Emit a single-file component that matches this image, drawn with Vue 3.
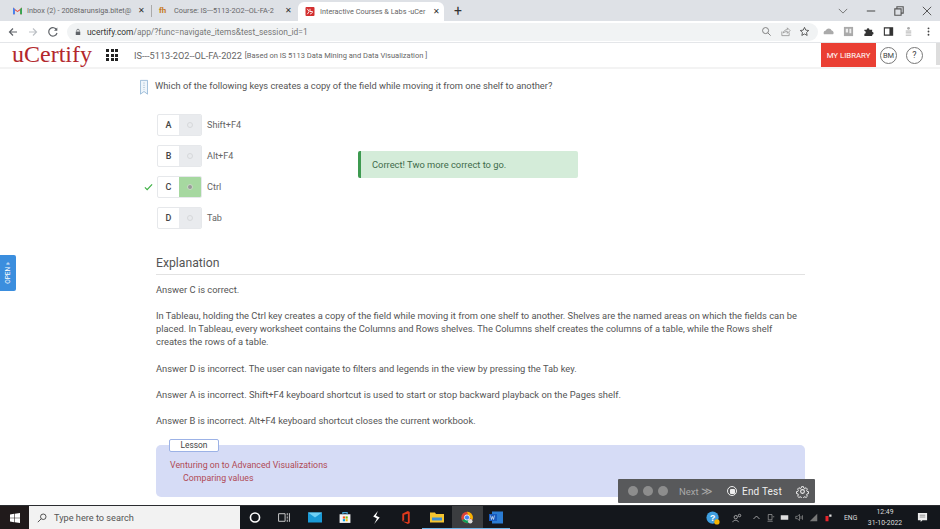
<script setup>
const options = [
  { key: 'A', label: 'Shift+F4' },
  { key: 'B', label: 'Alt+F4' },
  { key: 'C', label: 'Ctrl', correct: true },
  { key: 'D', label: 'Tab' },
]
const paragraphs = [
  'Answer C is correct.',
  'In Tableau, holding the Ctrl key creates a copy of the field while moving it from one shelf to another. Shelves are the named areas on which the fields can be placed. In Tableau, every worksheet contains the Columns and Rows shelves. The Columns shelf creates the columns of a table, while the Rows shelf creates the rows of a table.',
  'Answer D is incorrect. The user can navigate to filters and legends in the view by pressing the Tab key.',
  'Answer A is incorrect. Shift+F4 keyboard shortcut is used to start or stop backward playback on the Pages shelf.',
  'Answer B is incorrect. Alt+F4 keyboard shortcut closes the current workbook.',
]
</script>

<template>
  <div class="page">
    <div class="tabstrip">
      <div class="tab tab-first">
        <svg class="favicon" viewBox="0 0 12 10"><path d="M0 10V1l6 4.500L12 1v9H9.500V4.500L6 7 2.500 4.500V10z" fill="#ea4335"/><path d="M0 1v9h2.500V3z" fill="#4285f4"/><path d="M12 1v9H9.500V3z" fill="#34a853"/></svg>
        <span class="tab-title">Inbox (2) - 2008tarunsiga.bitet@</span>
        <span class="tab-x">✕</span>
      </div>
      <i class="tab-sep"></i>
      <div class="tab tab-second">
        <span class="favicon fh">fh</span>
        <span class="tab-title">Course: IS---5113-2O2--OL-FA-2</span>
        <span class="tab-x">✕</span>
      </div>
      <div class="tab tab-active">
        <svg class="favicon" viewBox="0 0 10 10"><rect width="10" height="10" rx="1" fill="#d32f2f"/><path d="M2 2l2 3-2 3M5 2v3h3M5 8l3-2" stroke="#fff" fill="none" stroke-width="1"/></svg>
        <span class="tab-title">Interactive Courses &amp; Labs -uCer</span>
        <span class="tab-x">✕</span>
      </div>
      <span class="newtab">+</span>
      <div class="winctl">
        <svg viewBox="0 0 10 10" class="wc"><path d="M2 3.500l3 3 3-3" fill="none" stroke="#777" stroke-width=".7"/></svg>
        <svg viewBox="0 0 10 10" class="wc"><path d="M2 5h6" stroke="#555" stroke-width=".8"/></svg>
        <svg viewBox="0 0 10 10" class="wc"><path d="M2 3.500h4.500V8H2zM3.500 3.500V2H8v4.500H6.500" fill="none" stroke="#555" stroke-width=".8"/></svg>
        <svg viewBox="0 0 10 10" class="wc"><path d="M2 2l6 6M8 2l-6 6" stroke="#555" stroke-width=".7"/></svg>
      </div>
    </div>

    <div class="toolbar">
      <svg class="nav" viewBox="0 0 12 12"><path d="M10 6H2.500M6 2.500L2.500 6 6 9.500" fill="none" stroke="#5f6368" stroke-width="1.200"/></svg>
      <svg class="nav" viewBox="0 0 12 12"><path d="M2 6h7.500M6 2.500L9.500 6 6 9.500" fill="none" stroke="#bdc1c6" stroke-width="1.200"/></svg>
      <svg class="nav" viewBox="0 0 12 12"><path d="M9.700 4A4.200 4.200 0 1 0 10 7" fill="none" stroke="#5f6368" stroke-width="1.200"/><path d="M10.300 1.500v3.300H7z" fill="#5f6368"/></svg>
      <div class="omnibox">
        <svg class="lock" viewBox="0 0 8 10"><path d="M1 4.500h6V9H1z" fill="#5f6368"/><path d="M2.300 4.500V3a1.700 1.700 0 0 1 3.400 0v1.500" fill="none" stroke="#5f6368"/></svg>
        <span class="url"><b>ucertify.com</b>/app/?func=navigate_items&amp;test_session_id=1</span>
        <svg class="omni-i" viewBox="0 0 12 12"><circle cx="5" cy="5" r="3.300" fill="none" stroke="#777"/><path d="M7.500 7.500L10.500 10.500" stroke="#777"/></svg>
        <svg class="omni-i" viewBox="0 0 12 12"><path d="M2 6v4.500h8V7M3.500 7.500C4 5 6 4 8 4V2l3 3-3 3V6C6 6 5 6.500 3.500 7.500z" fill="none" stroke="#888" stroke-width=".8"/></svg>
        <svg class="omni-i" viewBox="0 0 12 12"><path d="M6 1.500l1.400 3 3.200.4-2.400 2.200.7 3.200L6 8.700l-2.900 1.600.7-3.200L1.400 4.900l3.200-.4z" fill="none" stroke="#444" stroke-width=".9"/></svg>
      </div>
      <div class="ext">
        <svg viewBox="0 0 12 12"><path d="M1 9a3 3 0 0 1 2-4 3.500 3.500 0 0 1 6.500 0A2.500 2.500 0 0 1 11 9z" fill="#aaa"/></svg>
        <svg viewBox="0 0 12 12"><rect x="1" y="1" width="10" height="10" fill="#aaa"/><path d="M3 3h2.500v4H3zM7 3h2v5H7z" fill="#eee"/></svg>
        <svg viewBox="0 0 12 12"><path d="M1.500 4H4a1.500 1.500 0 0 1 3 0h3v2.500a1.500 1.500 0 0 1 0 3V11H1.500V8.500a1.500 1.500 0 0 0 0-3z" fill="#333"/></svg>
        <svg viewBox="0 0 12 12"><path d="M1.500 2h9v8h-9z" fill="none" stroke="#333" stroke-width="1.200"/><path d="M7 2h3.500v8H7z" fill="#333"/></svg>
        <svg viewBox="0 0 12 12"><circle cx="6" cy="2.500" r="1.500" fill="#aaa"/><path d="M3 5.500h6M3 7.500h6M3 10h6" stroke="#aaa"/></svg>
        <svg viewBox="0 0 12 12"><circle cx="6" cy="2.500" r="1" fill="#444"/><circle cx="6" cy="6" r="1" fill="#444"/><circle cx="6" cy="9.500" r="1" fill="#444"/></svg>
      </div>
    </div>

    <header class="appbar">
      <span class="logo">uCertify</span>
      <span class="grid-ic"><i v-for="n in 9" :key="n"></i></span>
      <span class="course">IS---5113-2O2--OL-FA-2022</span>
      <span class="course-sub">[Based on IS 5113 Data Mining and Data Visualization ]</span>
      <span class="library">MY LIBRARY</span>
      <span class="circle">BM</span>
      <span class="circle help">?</span>
      <i class="scroll-thumb"></i>
    </header>

    <main class="content">
      <div class="question">
        <svg class="bookmark" viewBox="0 0 9 17"><path d="M.5.500h8v15.500L4.500 13 .5 16z" fill="#eef5fb" stroke="#7fa8cc" stroke-width=".8"/><path d="M4.500 3v8" stroke="#7f9fb8" stroke-dasharray="1 1.500"/></svg>
        <span>Which of the following keys creates a copy of the field while moving it from one shelf to another?</span>
      </div>

      <div class="answers">
        <div class="options">
          <div v-for="o in options" :key="o.key" class="option">
            <span class="tick"><svg v-if="o.correct" viewBox="0 0 10 8"><path d="M1 4.500L3.500 7 9 1" fill="none" stroke="#3cb043" stroke-width="1.300"/></svg></span>
            <span class="opt-box">
              <span class="opt-key">{{ o.key }}</span>
              <span class="opt-radio" :class="{ 'is-correct': o.correct }"><i></i></span>
            </span>
            <span class="opt-label">{{ o.label }}</span>
          </div>
        </div>
        <div class="alert">Correct! Two more correct to go.</div>
      </div>

      <h2 class="ex-title">Explanation</h2>
      <p v-for="(p, i) in paragraphs" :key="i" class="ex-p">{{ p }}</p>

      <section class="lesson">
        <span class="lesson-tag">Lesson</span>
        <div class="lesson-1">Venturing on to Advanced Visualizations</div>
        <div class="lesson-2">Comparing values</div>
      </section>
    </main>

    <div class="open-tab"><span>OPEN »</span></div>

    <div class="floatbar">
      <i class="dot"></i><i class="dot"></i><i class="dot"></i>
      <span class="next">Next <span class="chev">≫</span></span>
      <span class="endicon"><i></i></span>
      <span class="endtest">End Test</span>
      <svg class="gear" viewBox="0 0 24 24"><path d="M10 2h4l.6 3 2.200.9 2.500-1.700 2.800 2.800-1.700 2.500.9 2.200 3 .6v4l-3 .6-.9 2.200 1.700 2.500-2.800 2.800-2.500-1.700-2.200.9-.6 3h-4l-.6-3-2.200-.9-2.500 1.700-2.800-2.800 1.700-2.500-.9-2.200-3-.6v-4l3-.6.9-2.200-1.700-2.500L4.700 4.200l2.500 1.700 2.200-.9z" fill="none" stroke="#eee" stroke-width="2" transform="translate(1.200 1.200) scale(.9)"/><circle cx="12" cy="12" r="3.500" fill="none" stroke="#eee" stroke-width="2"/></svg>
    </div>

    <footer class="taskbar">
      <span class="start"><svg viewBox="0 0 12 12"><path d="M0 1.700L5 1v4.700H0zM5.700.9L12 0v5.700H5.700zM0 6.300h5V11L0 10.300zM5.700 6.300H12V12l-6.300-.9z" fill="#fff"/></svg></span>
      <div class="search">
        <svg viewBox="0 0 12 12"><circle cx="7.500" cy="4.500" r="3.300" fill="none" stroke="#333"/><path d="M5 7L1 11" stroke="#333"/></svg>
        <span>Type here to search</span>
      </div>
      <div class="apps">
        <span class="app"><svg viewBox="0 0 12 12"><circle cx="6" cy="6" r="4.200" fill="none" stroke="#fff" stroke-width="1.500"/></svg></span>
        <span class="app"><svg viewBox="0 0 12 12"><path d="M1 2.500h6v7H1zM9 2v2M9 5v2M9 8v2M11 2v8" fill="none" stroke="#ccc" stroke-width=".9"/></svg></span>
        <span class="app"><svg viewBox="0 0 14 12"><rect y="1" width="14" height="10" fill="#1a9ad6"/><path d="M0 1l7 5 7-5z" fill="#6fd0f5"/></svg></span>
        <span class="app"><svg viewBox="0 0 12 12"><path d="M1 3h10v8H1z" fill="#f5f5f5"/><path d="M4 3V1.500h4V3" fill="none" stroke="#4aa8d8"/><rect x="4" y="5" width="2" height="2" fill="#f25022"/><rect x="6.500" y="5" width="2" height="2" fill="#7fba00"/><rect x="4" y="7.500" width="2" height="2" fill="#00a4ef"/><rect x="6.500" y="7.500" width="2" height="2" fill="#ffb900"/></svg></span>
        <span class="app"><svg viewBox="0 0 12 14"><path d="M8 0L3 6l4 2-3 6 6-7-4-2z" fill="#fff"/></svg></span>
        <span class="app"><svg viewBox="0 0 12 14"><path d="M2 3l6-3 2 1v12l-2 1-6-3 6 1V3L4 4v6l-2 1z" fill="#e03a1c"/></svg></span>
        <span class="app app-on"><svg viewBox="0 0 14 12"><path d="M0 1h5l1 1.500h8V11H0z" fill="#f4c430"/><rect x="2" y="6" width="10" height="3" fill="#3f8fd6"/></svg></span>
        <span class="app app-active app-on"><svg viewBox="0 0 16 16"><circle cx="8" cy="8" r="7" fill="#db4437"/><path d="M8 8L1.900 11.500A7 7 0 0 0 8 15c1 0 2-.2 3-.7z" fill="#0f9d58"/><path d="M8 1a7 7 0 0 1 6.500 10L11 8z" fill="#f4b400"/><circle cx="8" cy="8" r="3.200" fill="#4285f4" stroke="#fff"/><circle cx="12" cy="12.500" r="2.800" fill="#ddd"/></svg></span>
        <span class="app app-on app-last"><svg viewBox="0 0 14 12"><rect x="3" width="11" height="12" fill="#2b7cd3"/><rect y="2.500" width="8" height="7" fill="#185abd"/><path d="M1.500 4l1 4 1-3 1 3 1-4" fill="none" stroke="#fff" stroke-width=".6"/></svg></span>
      </div>
      <div class="tray">
        <svg class="t-help" viewBox="0 0 16 16"><circle cx="7.500" cy="7.500" r="7" fill="#3f9fe0"/><text x="7.500" y="11" text-anchor="middle" font-size="10" font-family="Liberation Sans" fill="#fff" font-weight="700">?</text><circle cx="12.500" cy="12.500" r="3" fill="#f4b400"/></svg>
        <svg class="t-i t-people" viewBox="0 0 12 12"><circle cx="4.500" cy="5" r="2" fill="none" stroke="#ddd" stroke-width=".8"/><path d="M1 11c0-3 6-3 7 0" fill="none" stroke="#ddd" stroke-width=".8"/><circle cx="9" cy="3" r="1.500" fill="none" stroke="#ddd" stroke-width=".8"/></svg>
        <svg class="t-i" viewBox="0 0 12 12"><path d="M2 8l4-4 4 4" fill="none" stroke="#ccc"/></svg>
        <svg class="t-i" viewBox="0 0 12 12"><path d="M3 2h5v7H3zM2 11h7M9 5h2" fill="none" stroke="#bbb" stroke-width=".8"/></svg>
        <svg class="t-i" viewBox="0 0 12 12"><rect x="1" y="3" width="10" height="6" fill="#ddd"/></svg>
        <svg class="t-i" viewBox="0 0 12 12"><path d="M1 4.500h2L6 2v8L3 7.500H1zM8 4v4M10 3v6" fill="none" stroke="#aaa" stroke-width=".8"/></svg>
        <svg class="t-i" viewBox="0 0 12 12"><path d="M1 11L11 1v10z" fill="#777"/></svg>
        <svg class="t-i" viewBox="0 0 12 12"><rect x="2" y="4" width="4" height="7" fill="#e8232a"/><rect x="7" y="2" width="3" height="3" fill="#ddd"/></svg>
        <span class="lang">ENG</span>
        <span class="clock"><span>12:49</span><span>31-10-2022</span></span>
        <svg class="notif" viewBox="0 0 12 12"><path d="M1 1h10v8H6L4 11V9H1z" fill="#eee"/><path d="M3 3.500h6M3 5.500h6" stroke="#555" stroke-width=".6"/></svg>
      </div>
    </footer>
  </div>
</template>

<style scoped>
.page {
  position: relative;
  width: 940px;
  height: 529px;
  overflow: hidden;
  display: flex;
  flex-direction: column;
  background: #fff;
  font-family: Roboto, "Liberation Sans", sans-serif;
  color: #555;
}
.tabstrip {
  height: 21px;
  background: #dee1e6;
  display: flex;
  align-items: center;
  flex: none;
}
.tab {
  height: 21px;
  display: flex;
  align-items: center;
  box-sizing: border-box;
  font-size: 7.300px;
  color: #666;
  flex: none;
}
.tab-first { width: 151px; padding-left: 13px; }
.tab-second { width: 146px; padding-left: 7px; }
.tab-active {
  width: 146px;
  padding-left: 7px;
  background: #fff;
  border-radius: 6px 6px 0 0;
  height: 19px;
  align-self: flex-end;
}
.tab-sep { width: 1px; height: 12px; background: #aaa; flex: none; }
.favicon { width: 10px; height: 9px; margin-right: 5px; flex: none; }
.tab-first .favicon { width: 9px; }
.fh { font-size: 8px; color: #c77a1e; font-weight: 700; line-height: 9px; }
.tab-title { width: 105px; white-space: nowrap; flex: none; }
.tab-active .tab-title { width: 107px; }
.tab-x { font-size: 7.500px; color: #333; margin-left: 6px; }
.newtab { font-size: 14px; color: #333; margin-left: 10px; line-height: 14px; }
.winctl { margin-left: auto; display: flex; align-items: center; gap: 14px; padding-right: 6px; }
.wc { width: 14px; height: 14px; }
.toolbar {
  height: 22px;
  flex: none;
  display: flex;
  align-items: center;
  padding-left: 7px;
  box-sizing: border-box;
  border-bottom: 1px solid #e4e6e9;
  background: #fff;
}
.nav { width: 12px; height: 12px; margin-right: 8px; }
.omnibox {
  width: 751px;
  height: 18px;
  background: #f1f3f4;
  border-radius: 9px;
  display: flex;
  align-items: center;
  padding: 0 8px 0 8px;
  box-sizing: border-box;
}
.lock { width: 6px; height: 8px; margin-right: 6px; }
.url { font-size: 8.400px; color: #777; flex: 1; white-space: nowrap; }
.url b { font-weight: 400; color: #333; }
.omni-i { width: 11px; height: 11px; margin-left: 8px; }
.ext { display: flex; align-items: center; gap: 9px; margin-left: 4.500px; }
.ext svg { width: 11px; height: 11px; }
.appbar {
  position: relative;
  height: 24px;
  flex: none;
  display: flex;
  align-items: center;
  padding-left: 12px;
  border-bottom: 2px solid #f3f3f3;
}
.logo {
  font-family: "Liberation Serif", serif;
  font-size: 24px;
  color: #b3282d;
  width: 94px;
  line-height: 24px;
  margin-top: -3px;
}
.grid-ic { width: 12px; height: 12px; display: grid; grid-template-columns: repeat(3, 3px); gap: 1.500px; margin-right: 16px; }
.grid-ic i { background: #222; }
.course { font-size: 9.200px; color: #666; }
.course-sub { font-size: 7.500px; color: #666; margin-left: 3px; }
.library {
  margin-left: auto;
  width: 55px;
  height: 24px;
  background: #ea3f33;
  color: #fff;
  font-size: 7.800px;
  display: flex;
  align-items: center;
  justify-content: center;
}
.circle {
  width: 17px;
  height: 17px;
  box-sizing: border-box;
  border: 1px solid #777;
  border-radius: 50%;
  font-size: 7.500px;
  color: #444;
  display: flex;
  align-items: center;
  justify-content: center;
  margin-left: 4px;
  flex: none;
}
.help { margin-left: 9px; margin-right: 17px; font-size: 9px; }
.scroll-thumb { position: absolute; right: 0; top: 0; width: 4px; height: 22px; background: #ddd; }
.content {
  flex: 1;
  padding: 0 0 0 156px;
  position: relative;
}
.question {
  display: flex;
  align-items: flex-start;
  margin-left: -16px;
  padding-top: 9px;
  height: 44px;
  box-sizing: border-box;
  font-size: 9.300px;
  color: #555;
}
.bookmark { width: 8px; height: 17px; margin-right: 7px; margin-top: 1px; }
.question span { margin-top: 2px; }
.answers { display: flex; height: 124px; }
.options { width: 202px; display: flex; flex-direction: column; gap: 9px; margin-top: 1px; }
.option { display: flex; align-items: center; height: 22px; margin-left: -12px; }
.tick { width: 9px; height: 8px; margin-right: 4px; }
.tick svg { display: block; width: 9px; height: 8px; }
.opt-box {
  width: 45px;
  height: 22px;
  box-sizing: border-box;
  border: 1px solid #e6e8eb;
  border-radius: 2px;
  display: flex;
  overflow: hidden;
  background: #fff;
}
.opt-key { width: 21px; text-align: center; line-height: 20px; font-size: 9px; font-weight: 500; color: #444; }
.opt-radio { flex: 1; background: #e9ebee; display: flex; align-items: center; justify-content: center; }
.opt-radio i { width: 6px; height: 6px; border-radius: 50%; border: 1px solid #d6d8da; box-sizing: border-box; }
.opt-radio.is-correct { background: #a6d8a0; }
.opt-radio.is-correct i { background: #999; border-color: #c8dcc5; }
.opt-label { margin-left: 5px; font-size: 9.100px; color: #666; }
.alert {
  width: 220px;
  height: 27px;
  margin-top: 38px;
  background: #d4ecd9;
  border-left: 3px solid #3d9a50;
  border-radius: 2px;
  box-sizing: border-box;
  padding-left: 11px;
  font-size: 9.350px;
  line-height: 27px;
  color: #3f6b4b;
}
.ex-title {
  width: 649px;
  margin: 0 0 8px;
  padding-top: 17px;
  height: 18px;
  box-sizing: content-box;
  padding-bottom: 2px;
  border-bottom: 1px solid #e2e2e2;
  font-size: 12.200px;
  line-height: 18px;
  font-weight: 400;
  color: #555;
}
.ex-p {
  width: 648px;
  margin: 0 0 13.250px;
  font-size: 9.350px;
  line-height: 13px;
  color: #555;
}
.lesson {
  position: relative;
  width: 649px;
  height: 52px;
  margin-top: 18.250px;
  background: #d6dcf6;
  border-radius: 5px;
  box-sizing: border-box;
  padding: 14px 0 0 14px;
  font-size: 8.800px;
  color: #b04a55;
  line-height: 13px;
}
.lesson-2 { padding-left: 13px; }
.lesson-tag {
  position: absolute;
  left: 13px;
  top: -6px;
  width: 50px;
  height: 13px;
  background: #fff;
  border: 1px solid #9cb2e6;
  border-radius: 2px;
  box-sizing: border-box;
  color: #444;
  text-align: center;
  line-height: 11px;
  font-size: 8.400px;
}
.open-tab {
  position: absolute;
  left: 0;
  top: 255px;
  width: 16px;
  height: 36px;
  background: #3b8ede;
  border-radius: 0 2px 2px 0;
  display: flex;
  align-items: center;
  justify-content: center;
  color: #fff;
  font-size: 6.500px;
}
.open-tab span { transform: rotate(-90deg); white-space: nowrap; }
.floatbar {
  position: absolute;
  left: 618px;
  top: 479px;
  width: 197px;
  height: 24px;
  background: #58595b;
  border-radius: 1px;
  display: flex;
  align-items: center;
  padding-left: 10px;
  box-sizing: border-box;
  color: #eee;
}
.dot { width: 10px; height: 10px; border-radius: 50%; background: #8d8d8d; margin-right: 5px; flex: none; }
.next { font-size: 9.500px; color: #a8a8a8; margin-left: 6px; width: 48px; flex: none; }
.chev { font-size: 11px; }
.endicon { width: 10px; height: 10px; border: 1px solid #eee; border-radius: 50%; box-sizing: border-box; display: flex; align-items: center; justify-content: center; margin-right: 5px; flex: none; }
.endicon i { width: 5px; height: 5px; border-radius: 1px; background: #eee; }
.endtest { font-size: 10px; letter-spacing: .2px; width: 49px; flex: none; white-space: nowrap; }
.gear { width: 13px; height: 13px; margin-left: 5px; flex: none; }
.taskbar {
  height: 24px;
  flex: none;
  background: #14171c;
  display: flex;
  align-items: stretch;
  border-top: 1px solid #2a2c30;
  box-sizing: border-box;
}
.start { width: 29px; display: flex; align-items: center; justify-content: center; background: #201a1b; }
.start svg { width: 10px; height: 10px; }
.search {
  width: 211px;
  background: #f2f2f2;
  display: flex;
  align-items: center;
  padding-left: 8px;
  box-sizing: border-box;
  font-size: 9.200px;
  color: #555;
}
.search svg { width: 10px; height: 10px; margin-right: 7px; }
.apps { display: flex; }
.app { width: 30.500px; display: flex; align-items: center; justify-content: center; box-sizing: border-box; }
.app svg { width: 14px; height: 13px; }
.app:first-child { width: 29px; }
.app-last { width: 27px; }
.app-on { border-bottom: 1px solid #6cb4e8; }
.app-active { background: #3b3d40; }
.tray { margin-left: auto; display: flex; align-items: center; color: #ddd; padding-right: 12px; }
.t-help { width: 14px; height: 14px; margin-right: 12px; }
.t-i { width: 9px; height: 9px; margin-right: 5.400px; }
.t-people { width: 10px; height: 10px; margin-right: 9.400px; }
.lang { font-size: 6.800px; padding-left: 6px; width: 19px; }
.clock { display: flex; flex-direction: column; align-items: center; font-size: 6.800px; line-height: 10.500px; width: 38px; margin-left: 3px; }
.notif { width: 11px; height: 11px; margin-left: 13px; }
</style>

<style>
html, body { margin: 0; padding: 0; overflow: hidden; }
</style>
